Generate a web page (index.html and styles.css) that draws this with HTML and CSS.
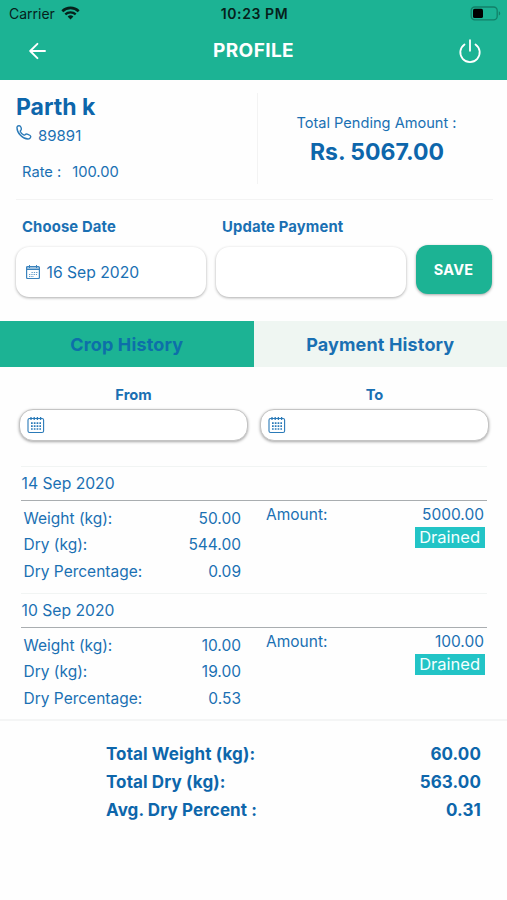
FILE: index.html
```html
<!DOCTYPE html>
<html lang="en">
<head>
    <meta charset="UTF-8">
    <title>Profile</title>
    <link rel="stylesheet" href="styles.css">
</head>
<body>
    <header class="header">
        <div class="status-bar">
            <div class="carrier">
                <span>Carrier</span>
                <svg class="wifi" width="19" height="14" viewBox="0 0 19 14">
                    <path d="M1.3 5.2a11.8 11.8 0 0 1 16.4 0" fill="none" stroke="#06211b" stroke-width="2.6"/>
                    <path d="M4.3 8.4a7.5 7.5 0 0 1 10.4 0" fill="none" stroke="#06211b" stroke-width="2.3"/>
                    <path d="M9.5 13.6L6.6 10.6a4.2 4.2 0 0 1 5.8 0z" fill="#06211b"/>
                </svg>
            </div>
            <span class="time">10:23 PM</span>
            <div class="battery-wrap">
                <svg width="31" height="15" viewBox="0 0 31 15">
                    <rect x="1.2" y="1" width="26" height="12.8" rx="3.6" fill="none" stroke="#128068" stroke-width="1.3"/>
                    <rect x="3" y="2.8" width="10" height="9.2" rx="1.6" fill="#000"/>
                    <path d="M28.8 5.2v4.4a2.4 2.4 0 0 0 0-4.4z" fill="#128068"/>
                </svg>
            </div>
        </div>
        <div class="nav-bar">
            <svg class="back" width="18" height="18" viewBox="0 0 18 18" fill="none" stroke="#fff" stroke-width="1.9" stroke-linecap="round" stroke-linejoin="round">
                <path d="M16 9H1.4M8.4 1.8L1.2 9l7.2 7.2"/>
            </svg>
            <h1>PROFILE</h1>
            <svg class="power" width="24" height="24" viewBox="0 0 24 24" fill="none" stroke="#fff" stroke-width="1.8" stroke-linecap="round">
                <path d="M12 1.2v10.6M6.500 5.400a9.700 9.700 0 1 0 11 0"/>
            </svg>
        </div>
    </header>

    <section class="summary">
        <div class="person">
            <h2>Parth k</h2>
            <div class="phone">
                <svg width="16" height="16" viewBox="0 0 16 16" fill="none" stroke="#2a7ab8" stroke-width="1.4" stroke-linejoin="round">
                    <path d="M1 2.200C1.200 1.200 2.300.7 3.300.8c.9.1 1.500.8 1.800 1.800.3 1 .4 1.700-.1 2.400-.4.5-.9.8-.7 1.400.4 1.200 2.400 3.300 3.700 3.700.6.2.9-.3 1.400-.7.700-.5 1.500-.4 2.500-.1 1.200.4 2.700 1 2.800 2 .1 1.400-1.200 2.700-2.800 2.700C6.900 14 .7 8 1 2.200z"/>
                </svg>
                <span>89891</span>
            </div>
            <div class="rate"><span>Rate :</span><span>100.00</span></div>
        </div>
        <div class="pending">
            <p>Total Pending Amount :</p>
            <strong>Rs. 5067.00</strong>
        </div>
    </section>

    <section class="payment">
        <div class="field">
            <label>Choose Date</label>
            <div class="box">
                <svg width="14" height="14" viewBox="0 0 14 14" fill="none" stroke="#3a83bd" stroke-width="1">
                    <rect x=".6" y="1.500" width="12.800" height="12" rx="1" stroke-width="1.2"/>
                    <path d="M.7 4.500h12.600M.7 3h12.600M3.500 0v3M10.500 0v3"/>
                    <path d="M5.500 7.500h6M3 9.500h8M3 11.500h5" stroke-dasharray="1.300 1" stroke-width=".8"/>
                </svg>
                <span>16 Sep 2020</span>
            </div>
        </div>
        <div class="field">
            <label>Update Payment</label>
            <div class="box"></div>
        </div>
        <button class="save">SAVE</button>
    </section>

    <nav class="tabs">
        <div class="tab active">Crop History</div>
        <div class="tab">Payment History</div>
    </nav>

    <section class="range">
        <div class="range-field">
            <label>From</label>
            <div class="pill">
                <svg width="18" height="18" viewBox="0 0 18 18" fill="none" stroke="#2a7ab8">
                    <rect x="1" y="2.500" width="15.600" height="14" rx="1.600" stroke-width="1.100"/>
                    <path d="M4 1v3M7.200 1v3M10.400 1v3M13.600 1v3" stroke-width="1.300"/>
                    <path d="M4 7.200h10M4 10.100h10M4 13h10" stroke-width="1.700" stroke-dasharray="1.700 1.100"/>
                </svg>
            </div>
        </div>
        <div class="range-field">
            <label>To</label>
            <div class="pill">
                <svg width="18" height="18" viewBox="0 0 18 18" fill="none" stroke="#2a7ab8">
                    <rect x="1" y="2.500" width="15.600" height="14" rx="1.600" stroke-width="1.100"/>
                    <path d="M4 1v3M7.200 1v3M10.400 1v3M13.600 1v3" stroke-width="1.300"/>
                    <path d="M4 7.200h10M4 10.100h10M4 13h10" stroke-width="1.700" stroke-dasharray="1.700 1.100"/>
                </svg>
            </div>
        </div>
    </section>

    <section class="history">
        <article class="entry">
            <h3>14 Sep 2020</h3>
            <div class="entry-body">
                <div class="details">
                    <div class="row"><span>Weight (kg):</span><span>50.00</span></div>
                    <div class="row"><span>Dry (kg):</span><span>544.00</span></div>
                    <div class="row"><span>Dry Percentage:</span><span>0.09</span></div>
                </div>
                <div class="amount">
                    <div class="amount-row"><span>Amount:</span><span>5000.00</span></div>
                    <span class="badge">Drained</span>
                </div>
            </div>
        </article>
        <article class="entry">
            <h3>10 Sep 2020</h3>
            <div class="entry-body">
                <div class="details">
                    <div class="row"><span>Weight (kg):</span><span>10.00</span></div>
                    <div class="row"><span>Dry (kg):</span><span>19.00</span></div>
                    <div class="row"><span>Dry Percentage:</span><span>0.53</span></div>
                </div>
                <div class="amount">
                    <div class="amount-row"><span>Amount:</span><span>100.00</span></div>
                    <span class="badge">Drained</span>
                </div>
            </div>
        </article>
    </section>

    <footer class="totals">
        <div class="total-row"><span>Total Weight (kg):</span><span>60.00</span></div>
        <div class="total-row"><span>Total Dry (kg):</span><span>563.00</span></div>
        <div class="total-row"><span>Avg. Dry Percent :</span><span>0.31</span></div>
    </footer>
</body>
</html>
```

FILE: styles.css
```css
* {
    box-sizing: border-box;
}

body {
    margin: 0;
    width: 507px;
    height: 900px;
    overflow: hidden;
    background: #fefefe;
    font-family: Inter, "Liberation Sans", sans-serif;
    font-size: 15.5px;
    color: #1a70b3;
}

h1, h2, h3, p {
    margin: 0;
}

svg {
    display: block;
    flex: none;
}

/* header */
.header {
    height: 80px;
    background: #1cb394;
}

.status-bar {
    display: grid;
    grid-template-columns: 1fr auto 1fr;
    align-items: center;
    height: 27px;
    padding: 0 6px 0 8px;
    font-size: 14px;
    color: #06211b;
}

.carrier {
    display: flex;
    align-items: center;
    gap: 6px;
    padding-left: 1px;
}

.wifi {
    margin-bottom: 2px;
}

.time {
    font-weight: 600;
    letter-spacing: 0.6px;
}

.battery-wrap {
    display: flex;
    justify-content: flex-end;
}

.nav-bar {
    display: grid;
    grid-template-columns: 1fr auto 1fr;
    align-items: center;
    height: 47px;
    padding: 0 25px;
    color: #fff;
}

.nav-bar h1 {
    font-size: 19px;
    font-weight: 700;
    letter-spacing: 0.4px;
}

.back {
    margin-left: 4px;
}

.power {
    justify-self: end;
}

/* person + pending amount */
.summary {
    display: flex;
    height: 120px;
    margin: 0 14px 0 16px;
    padding: 13px 0 15px;
    border-bottom: 1px solid #f3f3f3;
}

.person {
    width: 242px;
    border-right: 1px solid #f3f3f3;
}

.person h2 {
    font-size: 23px;
    font-weight: 700;
    line-height: 28px;
    color: #0d66ab;
}

.phone {
    display: flex;
    gap: 6px;
    margin-top: 4px;
    line-height: 22px;
    font-size: 15px;
}

.rate {
    display: flex;
    gap: 11px;
    margin: 14px 0 0 6px;
    line-height: 22px;
    font-size: 14.7px;
}

.pending {
    flex: 1;
    padding: 19px 0 0 2px;
    text-align: center;
}

.pending p {
    font-size: 14.6px;
    line-height: 22px;
}

.pending strong {
    display: block;
    margin: 3px 0 0 1px;
    font-size: 23px;
    font-weight: 700;
    line-height: 30px;
    color: #0d66ab;
}

/* payment form */
.payment {
    display: flex;
    align-items: flex-end;
    gap: 10px;
    padding: 17px 15px 0 15.5px;
}

.field {
    width: 190px;
}

.field label {
    display: block;
    margin: 0 0 10px 6.5px;
    font-size: 14.8px;
    font-weight: 700;
    letter-spacing: 0.15px;
    line-height: 20px;
}

.box {
    display: flex;
    align-items: center;
    gap: 7px;
    height: 50px;
    padding: 0 10px;
    background: #fff;
    border-radius: 13px;
    box-shadow: 0 1px 3px rgba(0, 0, 0, 0.32);
    font-size: 15.7px;
}

.save {
    width: 76px;
    height: 49px;
    margin-bottom: 3px;
    padding: 0;
    border: none;
    border-radius: 12px;
    background: #1cb394;
    box-shadow: 0 1px 3px rgba(0, 0, 0, 0.35);
    color: #fff;
    font-family: inherit;
    font-size: 14.5px;
    font-weight: 700;
    letter-spacing: 0.2px;
}

/* tabs */
.tabs {
    display: flex;
    margin-top: 24px;
}

.tab {
    flex: 1;
    height: 46px;
    background: #eff6f2;
    font-size: 18px;
    font-weight: 700;
    letter-spacing: 0.15px;
    line-height: 47px;
    text-align: center;
}

.tab.active {
    background: #1cb394;
    color: #0d6fa9;
}

/* date range */
.range {
    display: flex;
    gap: 12px;
    padding: 18px 18px 0 19px;
}

.range-field {
    flex: 1;
}

.range-field label {
    display: block;
    margin-bottom: 4px;
    font-size: 14.7px;
    font-weight: 700;
    line-height: 20px;
    text-align: center;
}

.pill {
    display: flex;
    align-items: center;
    height: 32px;
    padding-left: 7px;
    background: #fff;
    border: 1px solid #c4c4c4;
    border-radius: 14px;
    box-shadow: 0 1px 3px rgba(0, 0, 0, 0.35);
}

/* history list */
.history {
    padding: 25px 20px 0 21px;
}

.entry {
    height: 127px;
    border-top: 1px solid #f1f4f3;
}

.entry h3 {
    height: 34px;
    padding-left: 0.5px;
    border-bottom: 1px solid #a9adb0;
    font-size: 15.7px;
    font-weight: 400;
    line-height: 33px;
}

.entry-body {
    display: flex;
    justify-content: space-between;
    padding: 0 3px 0 2.5px;
}

.details {
    width: 217.5px;
    padding-top: 4.5px;
}

.row {
    display: flex;
    justify-content: space-between;
    line-height: 26.6px;
}

.amount {
    width: 218px;
    padding-top: 3px;
    text-align: right;
}

.amount-row {
    display: flex;
    justify-content: space-between;
    line-height: 21px;
}

.badge {
    display: inline-block;
    margin: 2px -1px 0 0;
    padding: 0 5px 0 4px;
    background: #22c4c6;
    color: #f4ffff;
    font-size: 16.5px;
    line-height: 21px;
}

/* totals */
.totals {
    margin-top: -1px;
    padding: 19px 26px 0 106px;
    border-top: 2px solid #f4f5f5;
}

.total-row {
    display: flex;
    justify-content: space-between;
    font-size: 17px;
    font-weight: 700;
    letter-spacing: 0.1px;
    line-height: 28px;
    color: #0d66ab;
}
```
